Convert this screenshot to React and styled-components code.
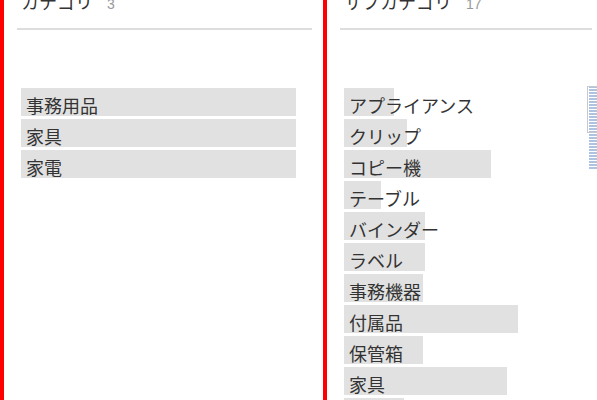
import React from 'react'
import styled, { createGlobalStyle } from 'styled-components'

const categories = [
  { name: '事務用品', w: 275 },
  { name: '家具', w: 275 },
  { name: '家電', w: 275 },
]

const subCategories = [
  { name: 'アプライアンス', w: 50 },
  { name: 'クリップ', w: 63 },
  { name: 'コピー機', w: 147 },
  { name: 'テーブル', w: 37 },
  { name: 'バインダー', w: 81 },
  { name: 'ラベル', w: 81 },
  { name: '事務機器', w: 79 },
  { name: '付属品', w: 174 },
  { name: '保管箱', w: 79 },
  { name: '家具', w: 163 },
  { name: '封筒', w: 60 },
  { name: '文房具', w: 90 },
  { name: '椅子', w: 120 },
  { name: '紙', w: 70 },
  { name: '電話機', w: 150 },
  { name: '本棚', w: 100 },
  { name: '家電', w: 40 },
]

function App() {
  return (
    <>
      <GlobalStyle />
      <Page>
        <Panel $width={323}>
          <Header>
            <Title>カテゴリ</Title>
            <Count>3</Count>
          </Header>
          <Body>
            <List>
              {categories.map((c) => (
                <Row key={c.name} $fill={c.w}>{c.name}</Row>
              ))}
            </List>
          </Body>
        </Panel>
        <Panel $width={280}>
          <Header>
            <Title>サブカテゴリ</Title>
            <Count>17</Count>
          </Header>
          <Body>
            <List>
              {subCategories.map((c) => (
                <Row key={c.name} $fill={c.w}>{c.name}</Row>
              ))}
            </List>
            <MiniMap>
              <Frame />
            </MiniMap>
          </Body>
        </Panel>
      </Page>
    </>
  )
}

const GlobalStyle = createGlobalStyle`
    body {
        margin: 0;
        background: #fff;
        overflow: hidden;
        font-family: 'Noto Sans CJK JP', 'Noto Sans', sans-serif;
    }
`

const Page = styled.div`
    display: flex;
    width: 640px;
    height: 400px;
    overflow: hidden;
`

const Panel = styled.section`
    width: ${(p) => p.$width}px;
    flex-shrink: 0;
    box-sizing: border-box;
    border-left: 4px solid #ff0000;
    display: flex;
    flex-direction: column;
`

const Header = styled.div`
    display: flex;
    align-items: baseline;
    margin: -8px 11px 0 13px;
    padding: 0 0 17px 4px;
    border-bottom: 2px solid #dddddd;
`

const Title = styled.span`
    font-size: 18px;
    line-height: 1;
    color: #333;
`

const Count = styled.span`
    font-family: 'Liberation Sans', sans-serif;
    font-size: 14px;
    line-height: 1;
    color: #999;
    margin-left: 14px;
`

const Body = styled.div`
    display: flex;
    align-items: flex-start;
    padding: 58px 0 0 17px;
`

const List = styled.div`
    flex: 1;
    display: flex;
    flex-direction: column;
    gap: 3px;
`

const Row = styled.div`
    height: 28px;
    box-sizing: border-box;
    padding: 8px 0 0 5px;
    font-size: 18px;
    line-height: 1;
    color: #333;
    white-space: nowrap;
    background: linear-gradient(#e1e1e1, #e1e1e1) no-repeat;
    background-size: ${(p) => p.$fill}px 100%;
`

const MiniMap = styled.div`
    position: relative;
    flex-shrink: 0;
    width: 14px;
    height: 84px;
    margin: -2px 2px 0 0;
    background: repeating-linear-gradient(
        to bottom,
        #aec3e0 0 2px,
        #ffffff 2px 3px
    );
    background-size: 12px 100%;
    background-position: 2px 0;
    background-repeat: no-repeat;
`

const Frame = styled.div`
    position: absolute;
    left: 0;
    top: 0;
    width: 14px;
    height: 47px;
    box-sizing: border-box;
    border: 1px solid #c8c8c8;
`

export default App
